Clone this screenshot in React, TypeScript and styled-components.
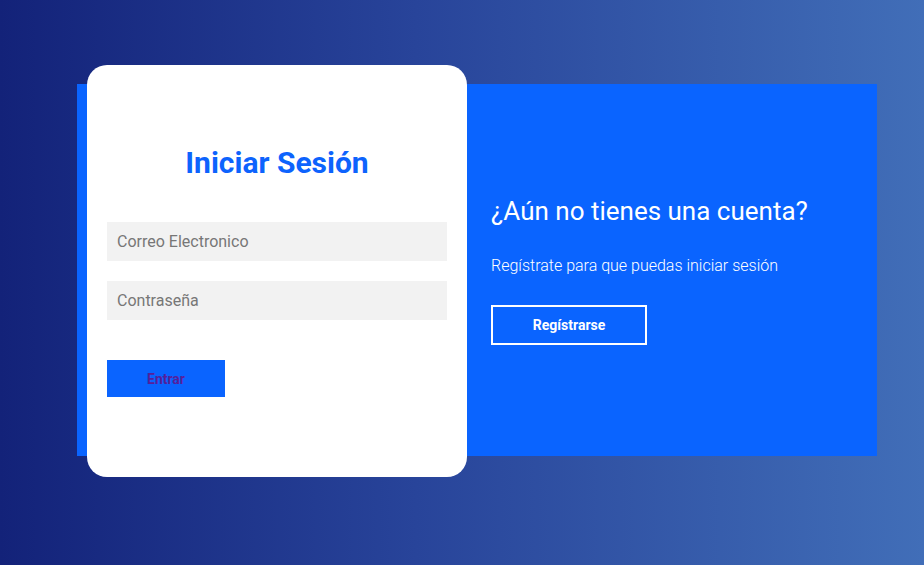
import React from "react";
import styled, { createGlobalStyle } from "styled-components";

const GlobalStyle = createGlobalStyle`
  * { box-sizing: border-box; }
  html, body { margin: 0; padding: 0; }
  body { font-family: Roboto, "Liberation Sans", sans-serif; }
`;

const Page = styled.div`
  width: 924px;
  min-height: 565px;
  background: linear-gradient(to right, #132279 0%, #28449a 45%, #416eb8 100%);
  padding: 84px 0 0 77px;
  font-family: Roboto, "Liberation Sans", sans-serif;
`;

const Panel = styled.div`
  width: 800px;
  height: 372px;
  background: #0a64ff;
  display: flex;
  align-items: flex-start;
`;

const Card = styled.div`
  width: 380px;
  height: 412px;
  margin: -19px 0 0 10px;
  background: #ffffff;
  border-radius: 20px;
  padding: 80px 20px 0;
  display: flex;
  flex-direction: column;
`;

const Title = styled.h2`
  margin: 0 0 41px;
  font-size: 30px;
  line-height: 36px;
  font-weight: 700;
  color: #0d63fd;
  text-align: center;
`;

const Input = styled.input`
  width: 340px;
  height: 39px;
  border: none;
  outline: none;
  background: #f2f2f2;
  padding: 0 10px;
  font-family: Roboto, "Liberation Sans", sans-serif;
  font-size: 16px;
  color: #333;
  margin-bottom: 20px;
  &::placeholder { color: #777777; }
`;

const SubmitButton = styled.button`
  margin-top: 20px;
  width: 118px;
  height: 37px;
  border: none;
  background: #0a64ff;
  color: #561f9b;
  font-family: Roboto, "Liberation Sans", sans-serif;
  font-size: 14px;
  font-weight: 700;
  cursor: pointer;
`;

const Side = styled.div`
  padding: 112px 0 0 24px;
  display: flex;
  flex-direction: column;
  align-items: flex-start;
  color: #ffffff;
`;

const SideTitle = styled.h3`
  margin: 0 0 30px;
  font-size: 26px;
  line-height: 30px;
  font-weight: 400;
`;

const SideText = styled.p`
  margin: 0 0 29px;
  font-size: 16px;
  line-height: 20px;
  font-weight: 300;
`;

const OutlineButton = styled.button`
  width: 156px;
  height: 40px;
  background: transparent;
  border: 2px solid #ffffff;
  color: #ffffff;
  font-family: Roboto, "Liberation Sans", sans-serif;
  font-size: 14px;
  font-weight: 700;
  cursor: pointer;
`;

export default function App() {
  return (
    <>
      <GlobalStyle />
      <Page>
        <Panel>
          <Card>
            <Title>Iniciar Sesión</Title>
            <Input type="email" placeholder="Correo Electronico" />
            <Input type="password" placeholder="Contraseña" />
            <SubmitButton>Entrar</SubmitButton>
          </Card>
          <Side>
            <SideTitle>¿Aún no tienes una cuenta?</SideTitle>
            <SideText>Regístrate para que puedas iniciar sesión</SideText>
            <OutlineButton>Regístrarse</OutlineButton>
          </Side>
        </Panel>
      </Page>
    </>
  );
}
